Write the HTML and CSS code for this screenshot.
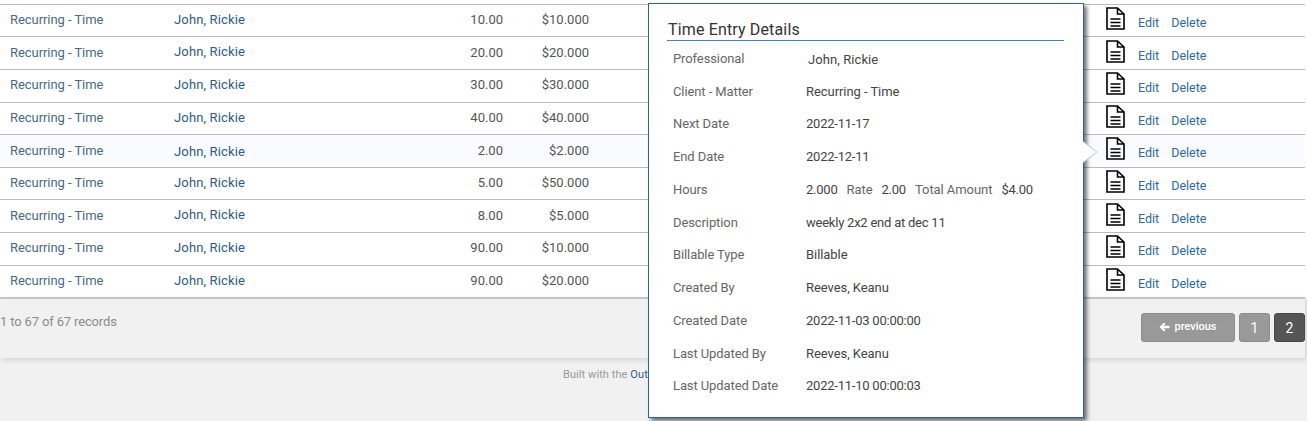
FILE: index.html
```html
<!DOCTYPE html>
<html lang="en">
<head>
  <meta charset="UTF-8" />
  <meta name="viewport" content="width=device-width, initial-scale=1.0" />
  <title>Recurring Time Entries</title>
  <link rel="stylesheet" href="styles.css">
</head>
<body>
  <svg class="defs" width="0" height="0">
    <symbol id="doc" viewBox="0 0 19 23">
      <path d="M1 1H11.500L18 7V22H1Z M11.500 1V7H18" fill="none" stroke="#000" stroke-width="1.600"/>
      <path d="M4.500 12H14.500M4.500 15.500H14.500M4.500 19H14.500" stroke="#000" stroke-width="1.400"/>
    </symbol>
  </svg>

  <div class="entries">
    <div class="row"><span class="client">Recurring - Time</span><a class="pro">John, Rickie</a><span class="num">10.00</span><span class="num">$10.000</span><svg class="doc"><use href="#doc"/></svg><span class="actions"><a>Edit</a><a>Delete</a></span></div>
    <div class="row"><span class="client">Recurring - Time</span><a class="pro up">John, Rickie</a><span class="num">20.00</span><span class="num">$20.000</span><svg class="doc"><use href="#doc"/></svg><span class="actions"><a>Edit</a><a>Delete</a></span></div>
    <div class="row"><span class="client">Recurring - Time</span><a class="pro">John, Rickie</a><span class="num">30.00</span><span class="num">$30.000</span><svg class="doc"><use href="#doc"/></svg><span class="actions"><a>Edit</a><a>Delete</a></span></div>
    <div class="row"><span class="client">Recurring - Time</span><a class="pro">John, Rickie</a><span class="num">40.00</span><span class="num">$40.000</span><svg class="doc"><use href="#doc"/></svg><span class="actions"><a>Edit</a><a>Delete</a></span></div>
    <div class="row hover"><span class="client">Recurring - Time</span><a class="pro down">John, Rickie</a><span class="num">2.00</span><span class="num">$2.000</span><svg class="doc"><use href="#doc"/></svg><span class="actions"><a>Edit</a><a>Delete</a></span></div>
    <div class="row"><span class="client">Recurring - Time</span><a class="pro">John, Rickie</a><span class="num">5.00</span><span class="num">$50.000</span><svg class="doc"><use href="#doc"/></svg><span class="actions"><a>Edit</a><a>Delete</a></span></div>
    <div class="row"><span class="client">Recurring - Time</span><a class="pro up">John, Rickie</a><span class="num">8.00</span><span class="num">$5.000</span><svg class="doc"><use href="#doc"/></svg><span class="actions"><a>Edit</a><a>Delete</a></span></div>
    <div class="row"><span class="client">Recurring - Time</span><a class="pro">John, Rickie</a><span class="num">90.00</span><span class="num">$10.000</span><svg class="doc"><use href="#doc"/></svg><span class="actions"><a>Edit</a><a>Delete</a></span></div>
    <div class="row"><span class="client">Recurring - Time</span><a class="pro">John, Rickie</a><span class="num">90.00</span><span class="num">$20.000</span><svg class="doc"><use href="#doc"/></svg><span class="actions"><a>Edit</a><a>Delete</a></span></div>
  </div>

  <div class="table-foot">
    <span class="records">1 to 67 of 67 records</span>
    <div class="pager">
      <a class="page prev">
        <svg width="11" height="10" viewBox="0 0 11 10"><path d="M5 0.500L0.500 5L5 9.500L6.500 8L4.500 6.300H10.500V3.700H4.500L6.500 2Z" fill="#fff"/></svg>
        previous
      </a>
      <a class="page num-page">1</a>
      <a class="page num-page active">2</a>
    </div>
  </div>

  <footer class="credits">Built with the <a>Out</a></footer>

  <div class="popover">
    <h3>Time Entry Details</h3>
    <dl class="details">
      <dt>Professional</dt><dd class="shifted">John, Rickie</dd>
      <dt>Client - Matter</dt><dd>Recurring - Time</dd>
      <dt>Next Date</dt><dd class="tight">2022-11-17</dd>
      <dt>End Date</dt><dd class="tight">2022-12-11</dd>
      <dt>Hours</dt><dd class="hours"><span class="tight">2.000</span><span class="muted">Rate</span><span class="tight">2.00</span><span class="muted">Total Amount</span><span class="tight">$4.00</span></dd>
      <dt>Description</dt><dd class="tight">weekly 2x2 end at dec 11</dd>
      <dt>Billable Type</dt><dd>Billable</dd>
      <dt>Created By</dt><dd>Reeves, Keanu</dd>
      <dt>Created Date</dt><dd class="tight">2022-11-03 00:00:00</dd>
      <dt>Last Updated By</dt><dd>Reeves, Keanu</dd>
      <dt>Last Updated Date</dt><dd class="tight">2022-11-10 00:00:03</dd>
    </dl>
    <svg class="arrow" width="16" height="24" viewBox="0 0 16 24">
      <path d="M1 1.500L15 12L1 22.500" fill="#fff" stroke="#c4c4c4" stroke-width="1"/>
    </svg>
  </div>
</body>
</html>
```

FILE: styles.css
```css
body {
  margin: 0;
  height: 421px;
  overflow: hidden;
  background-color: #f1f1f1;
  font-family: Roboto, "Liberation Sans", sans-serif;
  font-size: 13px;
  color: #444;
}

.defs {
  position: absolute;
}

.entries {
  background-color: #fff;
  padding-top: 3.800px;
}

.row {
  display: grid;
  grid-template-columns: 174px 270px 59px 86px 517px 32px 1fr;
  align-items: center;
  height: 31.600px;
  margin-right: 2px;
  border-top: 1px solid #bbb;
  color: #4a6a86;
}

.row.hover {
  background-color: #fafbfe;
}

.client,
.pro,
.num {
  margin-bottom: 2px;
}

.row.hover .client,
.row.hover .num {
  margin-bottom: 0;
}

.client {
  padding-left: 10px;
  letter-spacing: -0.060px;
}

.pro {
  color: #2c5c8a;
  letter-spacing: 0.150px;
}

.pro.up {
  position: relative;
  top: -1px;
}

.row .pro.down {
  margin-bottom: 0;
  position: relative;
  top: 1px;
}

.num {
  text-align: right;
  color: #555;
}

.doc {
  grid-column: 6;
  width: 19px;
  height: 23px;
  margin-top: -4px;
}

.actions {
  display: flex;
  gap: 12px;
  margin-top: 4px;
  font-size: 12.500px;
}

.actions a {
  color: #2f6a9e;
}

.table-foot {
  display: flex;
  justify-content: space-between;
  align-items: flex-start;
  height: 61px;
  border-top: 2px solid #c4c4c4;
  margin-right: 2px;
  padding: 14px 0 0 0;
  box-sizing: border-box;
  box-shadow: 2px 2px 5px rgba(0, 0, 0, 0.12);
  color: #8b8b8b;
}

.records {
  line-height: 16px;
  margin-top: 1px;
  letter-spacing: -0.150px;
}

.pager {
  display: flex;
  gap: 4px;
}

.page {
  display: flex;
  align-items: center;
  justify-content: center;
  gap: 4px;
  height: 29px;
  border-radius: 3px;
  box-sizing: border-box;
  border: 1px solid #8c8c8c;
  background-color: #999;
  color: #fff;
}

.prev {
  width: 94px;
  padding-bottom: 2px;
  font-size: 11px;
  font-weight: 500;
}

.num-page {
  width: 31px;
  font-size: 14px;
}

.num-page.active {
  background-color: #555;
  border-color: #484848;
}

.credits {
  padding: 10px 0 0 563px;
  font-size: 11px;
  letter-spacing: 0.080px;
  color: #999;
}

.credits a {
  color: #2c5c8a;
}

.popover {
  position: absolute;
  left: 648px;
  top: 3px;
  width: 436px;
  height: 415px;
  box-sizing: border-box;
  background-color: #fff;
  border: 1px solid #2f6293;
  box-shadow: 3px 3px 4px rgba(0, 0, 0, 0.55);
  padding: 0 19px 0 18px;
}

.popover h3 {
  margin: 16px 0 0;
  padding: 0 0 0 1px;
  height: 20px;
  border-bottom: 1px solid #4a7fb5;
  font-size: 16px;
  font-weight: 400;
  line-height: 20px;
  letter-spacing: 0.150px;
  color: #333;
}

.details {
  display: grid;
  grid-template-columns: 133px 1fr;
  grid-auto-rows: 32.780px;
  margin: 1.800px 0 0 6px;
  line-height: 32.780px;
}

.details dt {
  color: #666;
  letter-spacing: -0.100px;
}

.details dd {
  margin: 0;
  color: #444;
  letter-spacing: -0.060px;
}

.details .tight {
  letter-spacing: -0.230px;
}

.details dd.shifted {
  padding: 1px 0 0 2px;
  letter-spacing: 0.080px;
}

.hours {
  display: flex;
  gap: 9px;
}

.muted {
  color: #666;
}

.arrow {
  position: absolute;
  left: 433px;
  top: 136px;
}
```
